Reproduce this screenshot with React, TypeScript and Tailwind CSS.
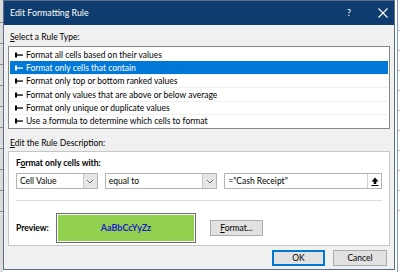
import React from 'react';

const rules = [
  'Format all cells based on their values',
  'Format only cells that contain',
  'Format only top or bottom ranked values',
  'Format only values that are above or below average',
  'Format only unique or duplicate values',
  'Use a formula to determine which cells to format',
];

function Pointer({ light }: { light?: boolean }) {
  const c = light ? '#ffffff' : '#000000';
  return (
    <svg width="8" height="6" viewBox="0 0 8 6" className="shrink-0">
      <rect x="0" y="0.5" width="2" height="5" fill={c} />
      <rect x="2" y="2.4" width="6" height="1.3" fill={c} />
    </svg>
  );
}

function Chevron() {
  return (
    <svg width="8" height="5" viewBox="0 0 8 5">
      <path d="M1 1 L4 4 L7 1" fill="none" stroke="#6b6b6b" strokeWidth="1" />
    </svg>
  );
}

function Select({ label, width }: { label: string; width: string }) {
  return (
    <div className={`${width} h-[16px] flex items-center border border-[#b4b4b4] bg-white`}>
      <span className="flex-1 pl-[3px] leading-none">{label}</span>
      <div className="w-[14px] h-full flex items-center justify-center bg-[#e6e6e6] border-l border-[#c8c8c8]">
        <Chevron />
      </div>
    </div>
  );
}

export default function App() {
  return (
    <div
      className="w-[400px] h-[272px] flex bg-white overflow-hidden text-[8.5px] text-black"
      style={{ fontFamily: 'Lato, "Noto Sans", sans-serif' }}
    >
      {/* spreadsheet behind, left edge */}
      <div className="w-[3px] h-full bg-[#dcdcdc] flex flex-col gap-[20px] pt-[22px]">
        <div className="h-px bg-[#8a8a8a]" />
        <div className="h-px bg-[#8a8a8a]" />
        <div className="h-px bg-[#8a8a8a]" />
        <div className="h-px bg-[#8a8a8a]" />
        <div className="h-px bg-[#8a8a8a]" />
        <div className="h-px bg-[#8a8a8a]" />
        <div className="h-px bg-[#8a8a8a]" />
        <div className="h-px bg-[#8a8a8a]" />
        <div className="h-px bg-[#8a8a8a]" />
        <div className="h-px bg-[#8a8a8a]" />
      </div>

      <div className="w-[392px] h-[270px] flex flex-col bg-[#f0f0f0] border border-[#5a6f8c]">
        {/* title bar */}
        <div className="h-[24px] flex items-center bg-[#0f3c6e] text-white text-[8.8px] pl-[6px] pr-[6px] shrink-0">
          <span className="flex-1">Edit Formatting Rule</span>
          <span className="w-[10px] text-center mr-[24px]">?</span>
          <svg width="10" height="10" viewBox="0 0 10 10">
            <path d="M0.5 0.5 L9.5 9.5 M9.5 0.5 L0.5 9.5" stroke="#ffffff" strokeWidth="1.1" />
          </svg>
        </div>

        <div className="flex flex-col px-[4px]">
          <div className="h-[20px] flex items-end pl-[2px] pb-[1px] leading-[13px]">
            <span><span className="underline">S</span>elect a Rule Type:</span>
          </div>

          <div className="mt-[1px] h-[83px] border border-[#828790] bg-white flex flex-col p-px">
            {rules.map((r, i) => (
              <div
                key={r}
                className={`h-[13.5px] flex items-center gap-[3px] pl-[5px] leading-[12px] ${
                  i === 1 ? 'bg-[#0078d7] text-white' : i > 1 ? 'border-t border-[#f0f0f0]' : ''
                }`}
              >
                <Pointer light={i === 1} />
                <span className="whitespace-nowrap">{r}</span>
              </div>
            ))}
          </div>

          <div className="h-[22px] flex items-end pl-[2px] pb-[1px] leading-[13px]">
            <span><span className="underline">E</span>dit the Rule Description:</span>
          </div>

          <div className="h-[95px] border border-[#c6c6c6] bg-white flex flex-col px-[7px]">
            <div className="h-[18px] flex items-end font-bold leading-[13px]">
              <span>F<span className="underline">o</span>rmat only cells with:</span>
            </div>
            <div className="mt-[3px] flex items-center gap-[7px]">
              <Select label="Cell Value" width="w-[83px]" />
              <Select label="equal to" width="w-[114px]" />
              <div className="w-[160px] h-[16px] flex items-center border border-[#b4b4b4] bg-white">
                <span className="flex-1 pl-[3px] leading-none whitespace-nowrap">="Cash Receipt"</span>
                <div className="w-[14px] h-full flex items-center justify-center border-l border-[#d0d0d0]">
                  <svg width="8" height="9" viewBox="0 0 8 9">
                    <path d="M4 0.5 L7.5 4.5 L5.3 4.5 L5.3 7 L2.7 7 L2.7 4.5 L0.5 4.5 Z" fill="#000" />
                    <rect x="0.5" y="8" width="7" height="1" fill="#000" />
                  </svg>
                </div>
              </div>
            </div>
            <div className="mt-[11px] h-px bg-[#dcdcdc]" />
            <div className="mt-[12px] flex items-center">
              <span className="w-[40px] font-bold">Preview:</span>
              <div className="w-[140px] h-[30px] border border-[#6e6e6e] p-px">
                <div className="w-full h-full bg-[#92d050] flex items-center justify-center font-bold text-[9px] text-[#1c1ccc]">
                  AaBbCcYyZz
                </div>
              </div>
              <button className="ml-[14px] w-[53px] h-[16px] border border-[#adadad] bg-[#e1e1e1] flex items-center justify-center leading-none">
                <span><span className="underline">F</span>ormat...</span>
              </button>
            </div>
          </div>

          <div className="mt-[4px] flex justify-end gap-[8px] pr-[3px]">
            <button className="w-[53px] h-[16px] border-2 border-[#0078d7] bg-[#e1e1e1] flex items-center justify-center leading-none">
              OK
            </button>
            <button className="w-[54px] h-[16px] border border-[#adadad] bg-[#e1e1e1] flex items-center justify-center leading-none">
              Cancel
            </button>
          </div>
        </div>
      </div>

      {/* spreadsheet behind, right edge */}
      <div className="w-[5px] h-full flex">
        <div className="w-[2px] h-full bg-white" />
        <div className="w-px h-full bg-[#7a9cc6]" />
        <div className="flex-1 h-full bg-white flex flex-col gap-[19px] pt-[30px]">
          <div className="h-px bg-[#c0c0c0]" />
          <div className="h-px bg-[#c0c0c0]" />
          <div className="h-px bg-[#c0c0c0]" />
          <div className="h-px bg-[#c0c0c0]" />
          <div className="h-px bg-[#c0c0c0]" />
          <div className="h-px bg-[#c0c0c0]" />
          <div className="h-px bg-[#c0c0c0]" />
          <div className="h-px bg-[#c0c0c0]" />
          <div className="h-px bg-[#c0c0c0]" />
          <div className="h-px bg-[#c0c0c0]" />
        </div>
      </div>
    </div>
  );
}
